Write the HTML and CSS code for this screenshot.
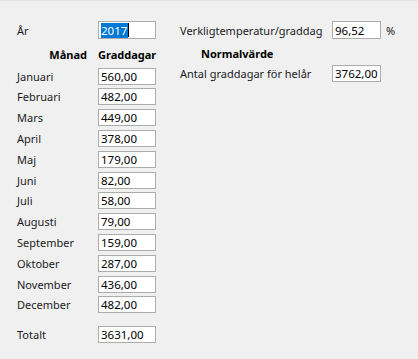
FILE: index.html
```html
<!DOCTYPE html>
<html>
<head>
    <meta charset="UTF-8">
    <title>Graddagar</title>
    <link rel="stylesheet" href="styles.css">
</head>
<body>
    <div class="dialog">
        <div class="months">
            <span class="label">År</span>
            <div class="box year"><span class="sel">2017</span><span class="caret"></span></div>

            <span class="head head-month">Månad</span>
            <span class="head">Graddagar</span>

            <span class="label">Januari</span>   <div class="box">560,00</div>
            <span class="label">Februari</span>  <div class="box">482,00</div>
            <span class="label">Mars</span>      <div class="box">449,00</div>
            <span class="label">April</span>     <div class="box">378,00</div>
            <span class="label">Maj</span>       <div class="box">179,00</div>
            <span class="label">Juni</span>      <div class="box">82,00</div>
            <span class="label">Juli</span>      <div class="box">58,00</div>
            <span class="label">Augusti</span>   <div class="box">79,00</div>
            <span class="label">September</span> <div class="box">159,00</div>
            <span class="label">Oktober</span>   <div class="box">287,00</div>
            <span class="label">November</span>  <div class="box">436,00</div>
            <span class="label">December</span>  <div class="box">482,00</div>

            <span class="spacer"></span><span class="spacer"></span>

            <span class="label">Totalt</span>    <div class="box">3631,00</div>
        </div>

        <div class="normal">
            <span class="label">Verkligtemperatur/graddag</span>
            <div class="box">96,52</div>
            <span class="unit">%</span>

            <span class="head head-normal">Normalvärde</span>
            <span></span>
            <span></span>

            <span class="label">Antal graddagar för helår</span>
            <div class="box">3762,00</div>
            <span></span>
        </div>
    </div>
</body>
</html>
```

FILE: styles.css
```css
body {
    margin: 0;
    background: #f0f0f0;
    font-family: "Noto Sans", "Open Sans", sans-serif;
    font-size: 11px;
    color: #1b1b24;
}

.dialog {
    display: flex;
    align-items: flex-start;
    height: 359px;
    box-sizing: border-box;
    padding: 20px 0 0 17px;
    border-top: 1px solid #e4e4e4;
}

.months {
    display: grid;
    grid-template-columns: 81px 58px;
    grid-template-rows: 18px 21px repeat(12, 17px) 5px 17px;
    row-gap: 3.8px;
}

.normal {
    display: grid;
    grid-template-columns: 152px 49px auto;
    grid-template-rows: 18px 18px 17px;
    row-gap: 3.8px;
    margin-left: 24px;
}

.label {
    display: flex;
    align-items: center;
    white-space: nowrap;
    line-height: 15px;
}

.head {
    align-self: end;
    padding-bottom: 2px;
    font-weight: bold;
    white-space: nowrap;
    color: #000;
    line-height: 15px;
}

.head-month {
    justify-self: end;
    margin-right: 11px;
}

.head-normal {
    margin-left: 21px;
    padding-bottom: 0;
}

.box {
    display: flex;
    align-items: center;
    box-sizing: border-box;
    padding-left: 2px;
    background: #fff;
    border: 1px solid #acacac;
    color: #000;
    line-height: 15px;
    font-size: 11.5px;
}

.year .sel {
    background: #0078d7;
    color: #fff;
    padding: 0 1px 0 0;
}

.year .caret {
    width: 1px;
    height: 14px;
    background: #000;
}

.unit {
    display: flex;
    align-items: center;
    margin-left: 5px;
}
```
